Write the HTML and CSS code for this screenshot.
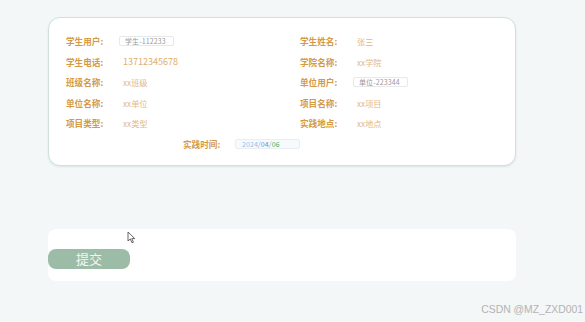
FILE: index.html
```html
<!DOCTYPE html>
<html>
<head>
    <meta charset="utf-8" />
    <title>实践信息</title>
    <link rel="stylesheet" href="styles.css">
</head>
<body>
    <div class="page">
        <div class="infoCard">
            <div class="grid">
                <div class="item"><span class="lbl">学生用户:</span><span class="box">学生-112233</span></div>
                <div class="item"><span class="lbl">学生姓名:</span><span class="val">张三</span></div>
                <div class="item"><span class="lbl">学生电话:</span><span class="val phone">13712345678</span></div>
                <div class="item"><span class="lbl">学院名称:</span><span class="val">xx学院</span></div>
                <div class="item"><span class="lbl">班级名称:</span><span class="val">xx班级</span></div>
                <div class="item"><span class="lbl">单位用户:</span><span class="box">单位-223344</span></div>
                <div class="item"><span class="lbl">单位名称:</span><span class="val">xx单位</span></div>
                <div class="item"><span class="lbl">项目名称:</span><span class="val">xx项目</span></div>
                <div class="item"><span class="lbl">项目类型:</span><span class="val">xx类型</span></div>
                <div class="item"><span class="lbl">实践地点:</span><span class="val">xx地点</span></div>
            </div>
            <div class="timeRow">
                <span class="lbl">实践时间:</span>
                <span class="box date"><span class="y">2024</span><span class="sl">/</span><span class="m">04</span><span class="sl">/</span><span class="d">06</span></span>
            </div>
        </div>

        <div class="btnCard">
            <button class="submit">提交</button>
        </div>
    </div>

    <svg class="cursor" width="9" height="13" viewBox="0 0 9 13">
        <path d="M1 1 L1 10 L3.3 8 L5 11.8 L6.4 11.2 L4.8 7.6 L7.8 7.6 Z" fill="#fff" stroke="#555" stroke-width="0.9" stroke-linejoin="round" />
    </svg>

    <div class="mark">CSDN @MZ_ZXD001</div>
</body>
</html>
```
FILE: styles.css
```css
* {
    margin: 0;
    padding: 0;
    box-sizing: border-box;
}

body {
    background: #f3f7f7;
    font-family: "Noto Sans CJK SC", "Noto Sans", sans-serif;
    width: 585px;
    height: 322px;
    overflow: hidden;
}

.page {
    padding: 17px 0 0 48px;
}

.infoCard {
    width: 468px;
    height: 149px;
    background: #ffffff;
    border: 1px solid #cfe0df;
    border-radius: 12px;
    padding: 13px 0 0 17px;
    box-shadow: 0 1px 2px rgba(150, 180, 180, 0.25);
}

.grid {
    display: grid;
    grid-template-columns: 234px 1fr;
    grid-auto-rows: 20.5px;
}

.item {
    display: flex;
    align-items: center;
}

.lbl {
    width: 53px;
    font-size: 8.6px;
    font-weight: bold;
    color: #d49a45;
    white-space: nowrap;
}

.val {
    padding-left: 4px;
    font-size: 8.2px;
    color: #e3b987;
}

.val.phone {
    font-size: 9px;
    color: #e0ad6c;
}

.box {
    display: inline-flex;
    align-items: center;
    width: 55px;
    height: 10px;
    padding-left: 5px;
    border: 1px solid #e6e8ea;
    border-radius: 2px;
    font-size: 7px;
    letter-spacing: 0.1px;
    color: #9a9a9a;
}

.timeRow {
    display: flex;
    align-items: center;
    height: 20.5px;
    padding-left: 117px;
}

.timeRow .lbl {
    width: 52px;
}

.date {
    width: 65px;
    padding-left: 6px;
    background: #f7fafc;
    border-color: #e8eef2;
    font-size: 7px;
}

.date .y { color: #8fc2ea; }
.date .sl { color: #a8a8a8; }
.date .m { color: #3d9cf0; }
.date .d { color: #3cae5c; }

.btnCard {
    margin-top: 63px;
    width: 468px;
    height: 52px;
    background: #ffffff;
    border-radius: 8px;
    padding-top: 16px;
}

.submit {
    width: 82px;
    height: 20px;
    border: none;
    border-radius: 8px;
    background: #9dbca7;
    color: #f4f6f4;
    font-family: "Noto Sans CJK SC", sans-serif;
    font-size: 13px;
    line-height: 20px;
}

.cursor {
    position: absolute;
    left: 127px;
    top: 231px;
}

.mark {
    position: absolute;
    right: 2px;
    top: 304px;
    font-family: "Liberation Sans", Arial, sans-serif;
    font-size: 10.4px;
    color: #b3b3b3;
}
```
